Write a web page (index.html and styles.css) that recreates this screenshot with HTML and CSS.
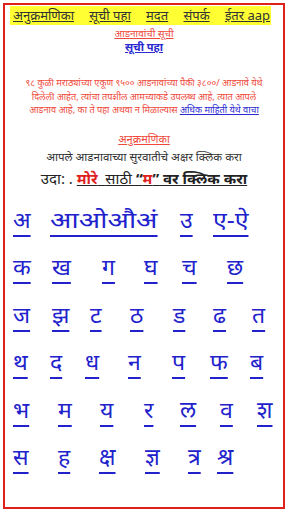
FILE: index.html
```html
<!DOCTYPE html>
<html lang="mr">
<head>
<meta charset="utf-8">
<link rel="stylesheet" href="styles.css">
</head>
<body>
<div class="frame">
  <nav class="nav">
    <a href="#">अनुक्रमणिका</a>
    <a href="#">सूची पहा</a>
    <a href="#">मदत</a>
    <a href="#">संपर्क</a>
    <a href="#">ईतर aap</a>
  </nav>
  <div class="sub red-link">आडनावांची सूची</div>
  <div class="sub2"><a href="#">सूची पहा</a></div>
  <p class="info">९८ कुळी मराठ्यांच्या एकूण ९५०० आडनावांच्या पैकी ३८००/ आडनावे येथे<br>दिलेली आहेत, त्यांचा तपशील आमच्याकडे उपलब्ध आहे, त्यात आपले<br>आडनाव आहे, का ते पहा अथवा न मिळाल्यास <a href="#">अधिक माहिती येथे वाचा</a></p>
  <div class="sub red-link idx">अनुक्रमणिका</div>
  <div class="hint">आपले आडनावाच्या सुरवातीचे अक्षर क्लिक करा</div>
  <div class="example">उदा: . <span class="ex-u"><span class="more">मोरे</span>&nbsp; <i>साठी</i> <b>“<span class="q">म</span>”</b> <b>वर क्लिक करा</b></span></div>
  <div class="letters">
    <div class="row r1">
      <a href="#">अ</a><a href="#" class="wide">आओऔअं</a><a href="#">उ</a><a href="#" class="pair">ए-ऐ</a>
    </div>
    <div class="row r2">
      <a href="#">क</a><a href="#">ख</a><a href="#">ग</a><a href="#">घ</a><a href="#">च</a><a href="#">छ</a>
    </div>
    <div class="row r3">
      <a href="#">ज</a><a href="#">झ</a><a href="#">ट</a><a href="#">ठ</a><a href="#">ड</a><a href="#">ढ</a><a href="#">त</a>
    </div>
    <div class="row r4">
      <a href="#">थ</a><a href="#">द</a><a href="#">ध</a><a href="#">न</a><a href="#">प</a><a href="#">फ</a><a href="#">ब</a>
    </div>
    <div class="row r5">
      <a href="#">भ</a><a href="#">म</a><a href="#">य</a><a href="#">र</a><a href="#">ल</a><a href="#">व</a><a href="#">श</a>
    </div>
    <div class="row r6">
      <a href="#">स</a><a href="#">ह</a><a href="#">क्ष</a><a href="#">ज्ञ</a><a href="#">त्र</a><a href="#">श्र</a>
    </div>
  </div>
</div>
</body>
</html>
```
FILE: styles.css
```css
html, body {
  margin: 0;
  padding: 0;
  background: #fff;
}
body {
  font-family: "Noto Sans", "Liberation Sans", sans-serif;
  width: 288px;
  height: 512px;
  overflow: hidden;
}
.frame {
  box-sizing: border-box;
  margin: 3px;
  width: 282px;
  height: 506px;
  border: 2px solid #e0201c;
  padding: 1px 5px 0 5px;
  text-align: center;
}
.nav {
  background: #ffff33;
  display: flex;
  justify-content: space-between;
  margin: 0 7px 0 0;
  padding: 1px 1px 2px 3px;
  height: 16px;
  align-items: center;
}
.nav a {
  color: #333;
  font-size: 13px;
  line-height: 16px;
  text-decoration: underline;
}
.sub {
  font-size: 10px;
  line-height: 14px;
  margin-top: 1px;
}
.red-link {
  color: #f0483a;
  text-decoration: underline;
}
.sub2 {
  font-size: 11px;
  line-height: 14px;
  font-weight: bold;
}
.sub2 a {
  color: #2a2ad0;
}
.info {
  margin: 22px 0 0 0;
  color: #f0483a;
  font-size: 9.2px;
  line-height: 13.5px;
  white-space: nowrap;
}
.info a {
  color: #2a2ad0;
}
.idx {
  font-size: 11px;
  margin-top: 15px;
}
.hint {
  color: #333;
  font-size: 11.5px;
  line-height: 16px;
  margin-top: 3px;
}
.example {
  color: #222;
  font-size: 15px;
  line-height: 22px;
  margin-top: 2px;
}
.ex-u {
  text-decoration: underline;
}
.more {
  color: #e0201c;
  font-weight: bold;
}
.q {
  color: #e0201c;
}
.letters {
  margin-top: 15px;
  padding-left: 3px;
  text-align: left;
}
.row {
  display: grid;
  height: 47.5px;
  align-items: start;
  justify-items: start;
}
.row a {
  color: #2222cc;
  font-size: 23px;
  line-height: 30px;
  text-decoration: underline;
  text-underline-offset: 7px;
  text-decoration-thickness: 1.5px;
}
.row a.wide {
  display: inline-block;
  transform: scaleX(1.22);
  transform-origin: left center;
}
.row a.pair {
  display: inline-block;
  transform: scaleX(1.08);
  transform-origin: left center;
}
.r1 { grid-template-columns: 37px 130px 33px auto; }
.r2 { grid-template-columns: 39px 50px 42px 38px 45px auto; }
.r3 { grid-template-columns: 39px 38px 40px 43px 40px 39px auto; }
.r4 { grid-template-columns: 37px 35px 43px 44px 38px 40px auto; }
.r5 { grid-template-columns: 45px 42px 44px 36px 40px 37px auto; }
.r6 { grid-template-columns: 45px 41px 46px 43px 29px auto; }
```
